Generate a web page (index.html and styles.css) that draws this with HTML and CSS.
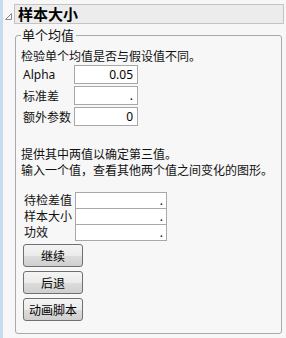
FILE: index.html
```html
<!DOCTYPE html>
<html lang="zh-CN">
<head>
    <meta charset="UTF-8">
    <meta name="viewport" content="width=device-width, initial-scale=1.0">
    <link rel="stylesheet" href="styles.css">
    <title>样本大小</title>
</head>
<body>
    <div class="head">
        <svg class="tri" width="7" height="7" viewBox="0 0 7 7">
            <polygon points="6.5,0.5 6.5,6.5 0.5,6.5" fill="none" stroke="#8a8a8a" stroke-width="1"/>
        </svg>
        <div class="title">样本大小</div>
    </div>

    <fieldset class="group">
        <legend>单个均值</legend>
        <p class="desc">检验单个均值是否与假设值不同。</p>

        <div class="params">
            <label>Alpha</label><input type="text" value="0.05" readonly>
            <label>标准差</label><input type="text" value="." readonly>
            <label>额外参数</label><input type="text" value="0" readonly>
        </div>

        <p class="info">提供其中两值以确定第三值。<br>输入一个值，查看其他两个值之间变化的图形。</p>

        <div class="solve">
            <div class="row"><label>待检差值</label><input type="text" value="." readonly></div>
            <div class="row"><label>样本大小</label><input type="text" value="." readonly></div>
            <div class="row"><label>功效</label><input type="text" value="." readonly></div>
        </div>

        <div class="buttons">
            <button class="btn">继续</button>
            <button class="btn">后退</button>
            <button class="btn">动画脚本</button>
        </div>
    </fieldset>
</body>
</html>
```

FILE: styles.css
```css
*{
    box-sizing: border-box;
    font-family: "Noto Sans", "Noto Sans CJK SC", sans-serif;
}

body{
    margin: 0;
    width: 286px;
    min-height: 100vh;
    background-color: #f7f7f7;
    border-left: 3px solid #c9dbef;
    color: #111;
}

.head{
    display: flex;
    align-items: flex-start;
    padding-top: 4px;
}

.tri{
    margin-top: 9px;
    margin-left: 2px;
    flex: none;
}

.title{
    flex: 1;
    height: 20px;
    margin-left: 2px;
    margin-right: 2px;
    padding-left: 3px;
    background-color: #ececec;
    border: 1px solid #c4c4c4;
    font-family: "Noto Sans CJK SC", sans-serif;
    font-size: 15px;
    font-weight: bold;
    line-height: 18px;
    color: #000;
}

.group{
    height: 307px;
    margin: 3px 4px 0 12px;
    padding: 0 5px;
    border: 1px solid #a9a9a9;
    border-radius: 3px;
}

.group legend{
    margin-left: 0;
    padding: 0 2px 0 1px;
    font-family: "Noto Sans CJK SC", sans-serif;
    font-size: 13px;
    line-height: 16px;
}

.desc, .info{
    margin: 0;
    font-family: "Noto Sans CJK SC", sans-serif;
    font-size: 12px;
    line-height: 16px;
}

.desc{
    margin-top: 5px;
}

.params{
    display: grid;
    grid-template-columns: 51px 64px;
    row-gap: 2px;
    margin-top: 1px;
    margin-left: 2px;
}

label{
    font-size: 12px;
    font-family: "Noto Sans", "Noto Sans CJK SC", sans-serif;
    align-self: center;
}

input{
    height: 19px;
    padding: 0 4px;
    border: 1px solid #a8a8a8;
    background-color: #fff;
    text-align: right;
    font-size: 12px;
    color: #000;
    outline: none;
}

.info{
    margin-top: 20px;
}

.solve{
    margin-top: 14px;
    margin-left: 3px;
}

.row{
    display: flex;
    align-items: center;
    height: 17px;
}

.row + .row{
    margin-top: -1px;
}

.row label{
    width: 51px;
    line-height: 15px;
}

.row input{
    width: 92px;
    height: 17px;
    padding-right: 3px;
    line-height: 13px;
}

.buttons{
    display: flex;
    flex-direction: column;
    gap: 4px;
    margin-top: 3px;
    margin-left: 2px;
}

.btn{
    width: 60px;
    height: 23px;
    padding: 0;
    border: 1px solid #707070;
    border-radius: 3px;
    background: linear-gradient(#f4f4f4, #ebebeb 50%, #dddddd 51%, #cfcfcf);
    font-family: "Noto Sans CJK SC", sans-serif;
    font-size: 12px;
    color: #000;
}
```
